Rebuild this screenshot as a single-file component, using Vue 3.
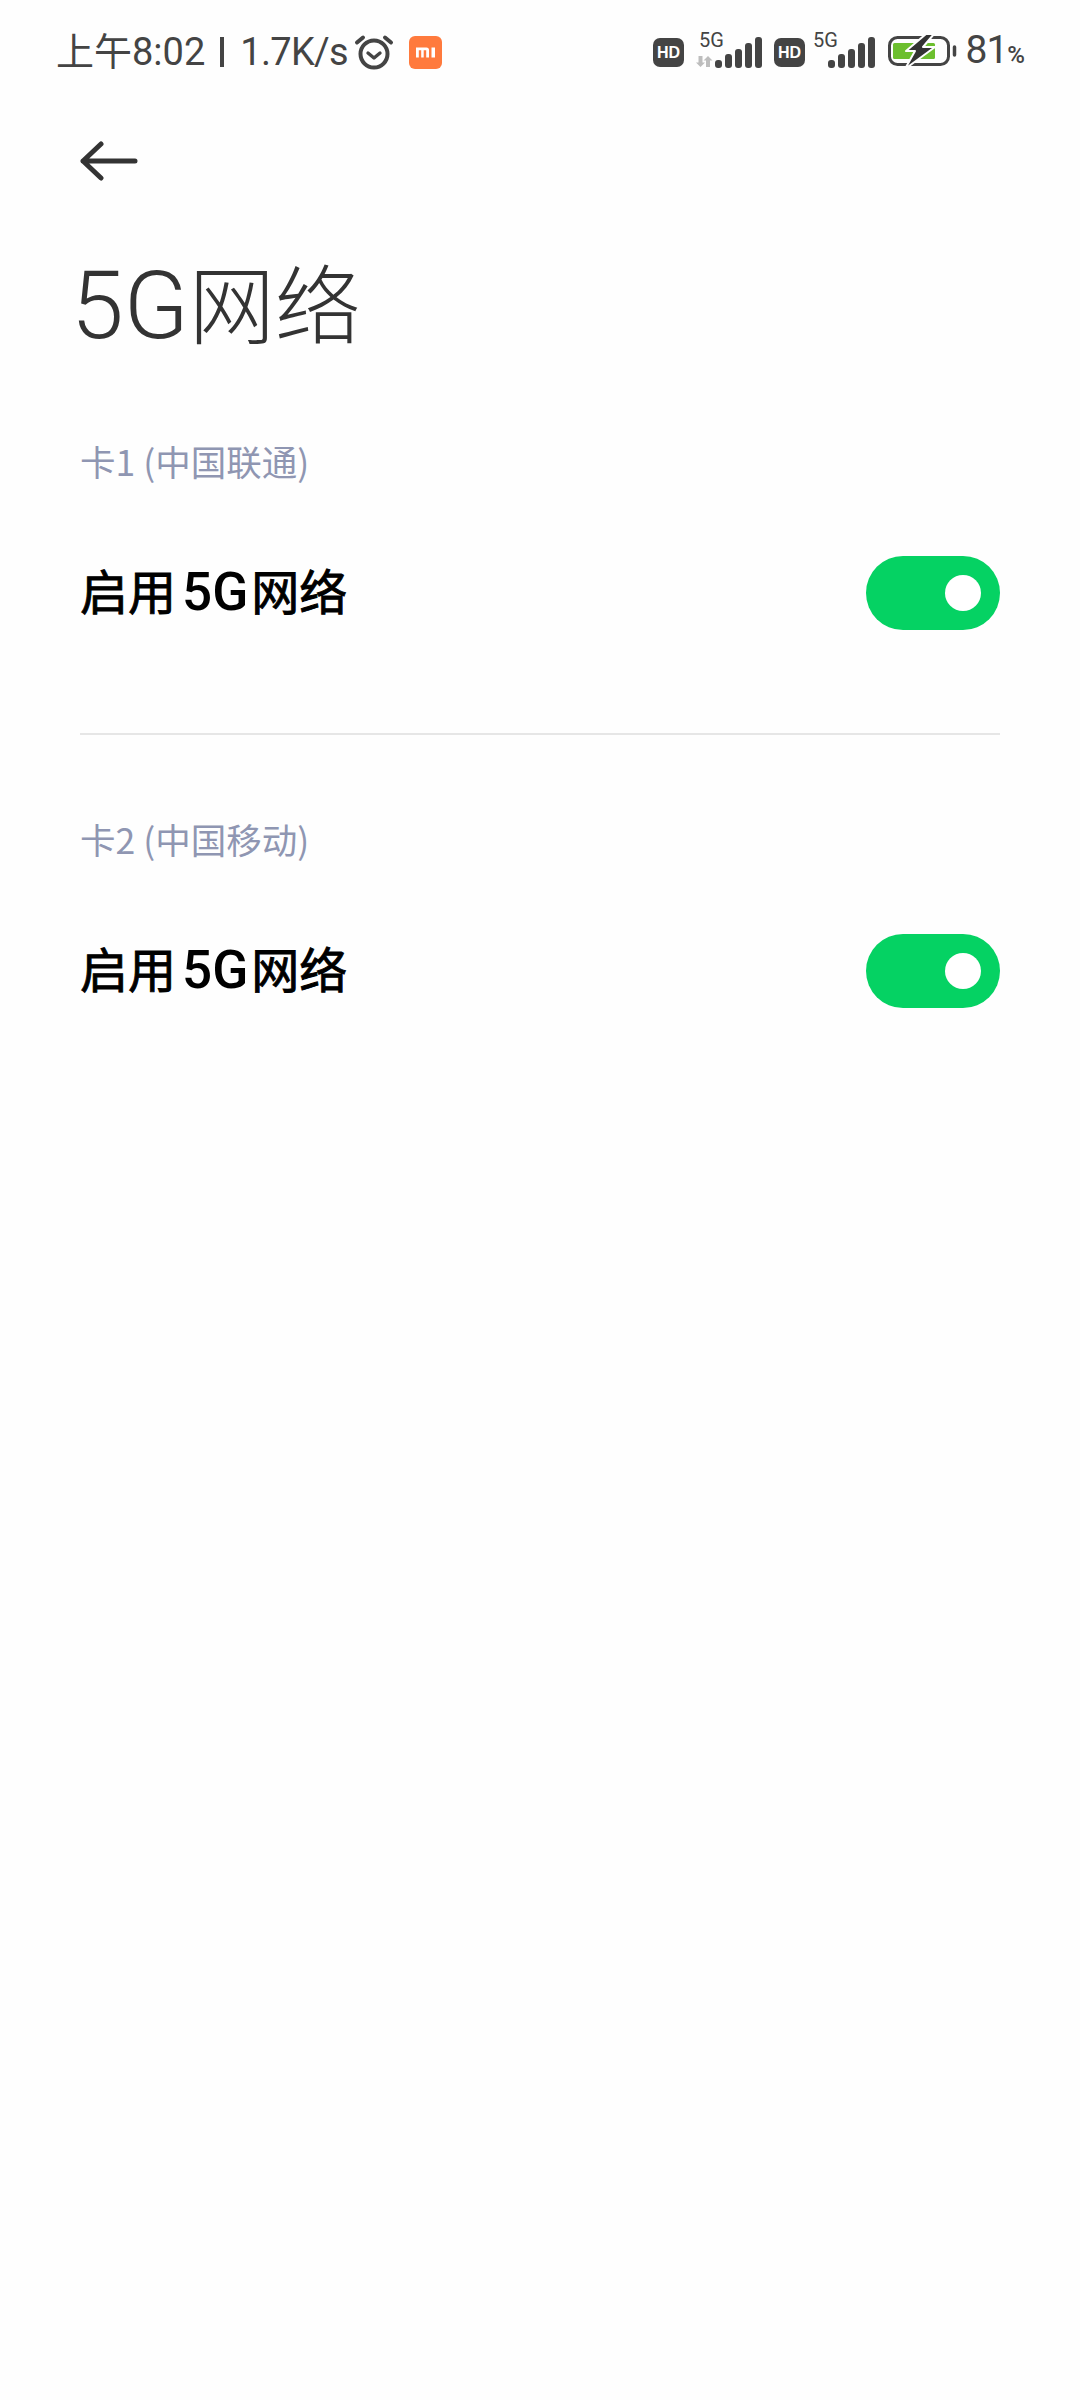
<script setup>
const sections = [
  { label: '卡1 (中国联通)', pre: '启用', latin: '5G', post: '网络' },
  { label: '卡2 (中国移动)', pre: '启用', latin: '5G', post: '网络' },
]
const bars = [
  { x: 0, h: 8 }, { x: 10, h: 14 }, { x: 20, h: 19 }, { x: 30, h: 25 }, { x: 40, h: 31 },
]
</script>

<template>
  <div class="page">
    <header class="status">
      <div class="status-left">
        <span class="time">上午8:02</span>
        <span class="sep"></span>
        <span class="speed">1.7K/s</span>
        <svg class="alarm" width="40" height="36" viewBox="0 0 40 36" fill="none" stroke="#444" stroke-linecap="round">
          <circle cx="20" cy="20" r="13.5" stroke-width="4" />
          <path d="M14 19l6 5 6-5" stroke-width="3.4" stroke-linejoin="round" />
          <path d="M3 8.5 9 3.500M37 8.500 31 3.500" stroke-width="4" />
        </svg>
        <svg class="mi" width="33" height="33" viewBox="0 0 33 33">
          <rect width="33" height="33" rx="6" fill="#ff7a3d" />
          <path d="M7 11.500h10.500a2.500 2.500 0 0 1 2.500 2.500v7.500h-2.800V14.300h-2.500v7.200h-2.500v-7.200H9.800v7.200H7zM22.500 11.500h3.500v10h-3.500z" fill="#fff" />
        </svg>
      </div>
      <div class="status-right">
        <svg class="hd" width="31" height="29" viewBox="0 0 31 29">
          <rect width="31" height="29" rx="7" fill="#444" />
          <text x="15.500" y="20" text-anchor="middle" class="hd-text">HD</text>
        </svg>
        <svg class="signal first" width="66" height="34" viewBox="0 0 66 34">
          <text x="3" y="12" class="net">5G</text>
          <path d="M2.500 21h4v6.500h2.500l-4.500 4.500-4.500-4.500h2.500zM10 32h4v-6.500h2.500L12 21l-4.500 4.500H10z" fill="#bdbdbd" />
          <rect v-for="b in bars" :key="b.x" :x="b.x + 19" :y="33 - b.h" width="7" :height="b.h" rx="3" fill="#444" />
        </svg>
        <svg class="hd" width="31" height="29" viewBox="0 0 31 29">
          <rect width="31" height="29" rx="7" fill="#444" />
          <text x="15.500" y="20" text-anchor="middle" class="hd-text">HD</text>
        </svg>
        <svg class="signal second" width="62" height="34" viewBox="0 0 62 34">
          <text x="0" y="12" class="net">5G</text>
          <rect v-for="b in bars" :key="b.x" :x="b.x + 15" :y="33 - b.h" width="7" :height="b.h" rx="3" fill="#444" />
        </svg>
        <svg class="battery" width="70" height="36" viewBox="0 -2 70 36" fill="none">
          <rect x="1.500" y="1.500" width="59" height="27" rx="8" stroke="#444" stroke-width="3" />
          <rect x="5" y="7" width="42" height="16" rx="1.500" fill="#6cbf2e" />
          <path d="M66.500 11v8" stroke="#444" stroke-width="3.500" stroke-linecap="round" />
          <path d="M38 -2 18 15h9L17 33 47 11H35l11-13z" fill="#333" stroke="#fefefe" stroke-width="2" stroke-linejoin="round" />
        </svg>
        <span class="level">81<small>%</small></span>
      </div>
    </header>

    <div class="nav">
      <svg width="60" height="42" viewBox="0 0 60 42" fill="none" stroke="#333" stroke-width="5" stroke-linecap="round" stroke-linejoin="round">
        <path d="M3 22h52M21 5 3 22 21 39" />
      </svg>
    </div>

    <h1 class="title"><span class="latin">5G</span>网络</h1>

    <section v-for="(s, i) in sections" :key="s.label" class="section" :class="{ last: i === sections.length - 1 }">
      <div class="label">{{ s.label }}</div>
      <div class="row">
        <span class="row-title">{{ s.pre }}<span class="row-latin">{{ s.latin }}</span>{{ s.post }}</span>
        <span class="switch"><span class="knob"></span></span>
      </div>
    </section>
  </div>
</template>

<style scoped>
.page {
  width: 1080px;
  height: 2400px;
  background: #fefefe;
  font-family: "Noto Sans CJK SC", "Noto Sans", sans-serif;
  overflow: hidden;
}
.status {
  height: 104px;
  box-sizing: border-box;
  padding: 30px 55px 0 56px;
  display: flex;
  justify-content: space-between;
  align-items: flex-start;
  color: #444;
}
.status-left, .status-right { display: flex; align-items: center; height: 44px; }
.status svg { overflow: visible; flex: none; }
.time, .speed, .level {
  font-family: Roboto, "Noto Sans CJK SC", sans-serif;
  font-size: 38px;
  line-height: 44px;
  white-space: nowrap;
}
.sep { width: 4px; height: 30px; background: #444; margin: 0 16px 0 15px; }
.speed { letter-spacing: -0.7px; }
.alarm { margin-left: 6px; }
.mi { margin-left: 15px; }
.hd-text { font: 700 16px "Liberation Sans", sans-serif; fill: #fff; }
.net { font: 400 20px Roboto, sans-serif; fill: #444; }
.signal.first { margin-left: 12px; margin-right: 12px; }
.signal.second { margin-left: 8px; margin-right: 13px; }
.level { margin-left: 7px; font-size: 39px; letter-spacing: -1px; }
.level small { font-size: 24px; font-weight: 500; letter-spacing: 0; }
.nav { height: 42px; padding: 35px 0 0 80px; }
.nav svg { display: block; }
.title {
  margin: 64px 0 0 71px;
  font-size: 86px;
  line-height: 112px;
  font-weight: 300;
  color: #333;
  white-space: nowrap;
}
.latin { font-family: Roboto, sans-serif; font-size: 95px; font-weight: 300; }
.section {
  margin: 0 80px;
  padding-bottom: 103px;
  border-bottom: 2px solid #e6e6e6;
}
.section.last { border-bottom: none; }
.section:first-of-type { margin-top: 74px; }
.section + .section { padding-top: 79px; }
.label {
  font-size: 35.5px;
  line-height: 50px;
  color: #8f96b2;
  white-space: nowrap;
}
.row {
  margin-top: 70px;
  height: 74px;
  display: flex;
  align-items: center;
  justify-content: space-between;
}
.row-title {
  font-size: 48px;
  font-weight: 400;
  -webkit-text-stroke: 0.9px #000;
  color: #000;
  white-space: nowrap;
  margin-top: -8px;
}
.row-latin { font-family: Roboto, sans-serif; font-size: 53px; font-weight: 500; -webkit-text-stroke: 0; margin: 0 3px 0 6px; }
.switch {
  width: 134px;
  height: 74px;
  border-radius: 37px;
  background: #05d263;
  position: relative;
  flex: none;
}
.knob {
  position: absolute;
  width: 36px;
  height: 36px;
  border-radius: 50%;
  background: #fff;
  right: 19px;
  top: 19px;
}
</style>
